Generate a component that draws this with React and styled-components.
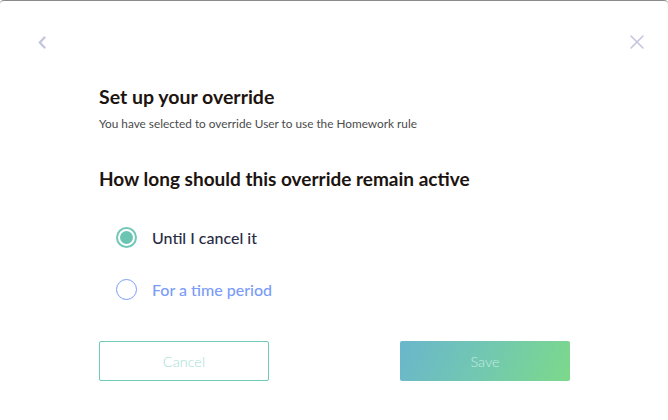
import React from 'react';
import styled, {createGlobalStyle, css} from "styled-components";

const GlobalStyle = createGlobalStyle`
    html, body {
        margin: 0;
        padding: 0;
        background: #ffffff;
    }
    body {
        font-family: Lato, "Noto Sans", sans-serif;
    }
`;

const Modal = styled.div`
    box-sizing: border-box;
    width: 668px;
    height: 420px;
    background: #ffffff;
    border-top: 1px solid #8a8a8a;
    border-radius: 4px;
    padding: 32px 22px 0 33px;
    display: flex;
    flex-direction: column;
`;
const TopBar = styled.div`
    display: flex;
    justify-content: space-between;
    align-items: center;
    height: 18px;
`;
const IconButton = styled.button`
    border: none;
    background: none;
    padding: 0;
    width: 18px;
    height: 18px;
    display: flex;
    align-items: center;
    justify-content: center;
    cursor: pointer;
    color: #c4c6de;
`;
const Body = styled.div`
    width: 471px;
    margin-left: 66px;
    display: flex;
    flex-direction: column;
`;
const Title = styled.h2`
    margin: 34px 0 0;
    font-size: 19.5px;
    font-weight: 700;
    color: #1c1410;
    line-height: 24px;
`;
const Subtitle = styled.p`
    margin: 7px 0 0;
    font-size: 11.8px;
    color: #4a4a4a;
    line-height: 16px;
`;
const Question = styled.h3`
    margin: 35px 0 0;
    font-size: 19px;
    font-weight: 700;
    color: #1c1410;
    line-height: 24px;
`;
const Options = styled.div`
    margin-top: 35px;
    padding-left: 17px;
    display: flex;
    flex-direction: column;
    gap: 30px;
`;
const Option = styled.label`
    display: flex;
    align-items: center;
    gap: 15px;
    height: 22px;
    cursor: pointer;
    font-size: 16px;
    font-weight: 500;
    color: ${props => props.checked ? '#2a2b45' : '#7b9cf9'};
`;
const Radio = styled.span`
    box-sizing: border-box;
    width: 21px;
    height: 21px;
    border-radius: 50%;
    display: flex;
    align-items: center;
    justify-content: center;
    ${props => props.checked ? css`
        border: 2px solid #72c8b8;
        &::after {
            content: "";
            width: 13px;
            height: 13px;
            border-radius: 50%;
            background: #6cc4b3;
        }
    ` : css`
        border: 1.5px solid #7b9cf9;
    `}
`;
const Actions = styled.div`
    margin-top: 41px;
    display: flex;
    justify-content: space-between;
`;
const Button = styled.button`
    box-sizing: border-box;
    width: 170px;
    height: 40px;
    border-radius: 2px;
    font-family: Lato, "Noto Sans", sans-serif;
    font-size: 14.5px;
    font-weight: 300;
    cursor: pointer;
    ${props => props.primary ? css`
        border: none;
        background: linear-gradient(115deg, #6ab6cc 0%, #72c8b0 50%, #7cd98a 100%);
        color: #c2ece2;
    ` : css`
        border: 1px solid #70c9b9;
        background: #ffffff;
        color: #a6e0d5;
    `}
`;

const ChevronLeft = () => (
    <svg width="10" height="13" viewBox="0 0 10 13" fill="none">
        <path d="M7.5 1.5L2.8 6.5L7.5 11.5" stroke="currentColor" strokeWidth="2.4" strokeLinecap="round" strokeLinejoin="round"/>
    </svg>
);
const CloseIcon = () => (
    <svg width="16" height="16" viewBox="0 0 16 16" fill="none">
        <path d="M2 2L14 14M14 2L2 14" stroke="currentColor" strokeWidth="1.6" strokeLinecap="round"/>
    </svg>
);

const options = [
    {id: 'cancel', label: 'Until I cancel it'},
    {id: 'period', label: 'For a time period'},
];

const App = () => {
    const [selected, setSelected] = React.useState('cancel');
    return (
        <>
            <GlobalStyle/>
            <Modal>
                <TopBar>
                    <IconButton aria-label="Back"><ChevronLeft/></IconButton>
                    <IconButton aria-label="Close"><CloseIcon/></IconButton>
                </TopBar>
                <Body>
                    <Title>Set up your override</Title>
                    <Subtitle>You have selected to override User to use the Homework rule</Subtitle>
                    <Question>How long should this override remain active</Question>
                    <Options>
                        {options.map(option => (
                            <Option key={option.id} checked={selected === option.id} onClick={() => setSelected(option.id)}>
                                <Radio checked={selected === option.id}/>
                                {option.label}
                            </Option>
                        ))}
                    </Options>
                    <Actions>
                        <Button>Cancel</Button>
                        <Button primary>Save</Button>
                    </Actions>
                </Body>
            </Modal>
        </>
    );
};

export default App;
